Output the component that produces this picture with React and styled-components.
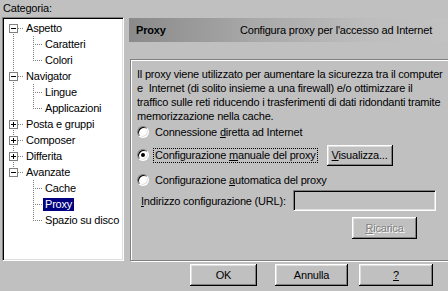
import React from "react";
import styled, { createGlobalStyle, css } from "styled-components";

const Global = createGlobalStyle`
  html, body { margin: 0; padding: 0; background: #c0c0c0; overflow: hidden; }
  body {
    font-family: "Liberation Sans", Arial, sans-serif;
    font-size: 11px;
    letter-spacing: -0.2px;
    color: #000;
  }
  #root { width: 448px; height: 291px; }
`;

const Page = styled.div`
  width: 448px;
  height: 291px;
  display: flex;
  flex-direction: column;
  overflow: hidden;
`;

const Top = styled.div`
  display: flex;
  height: 261px;
`;

const LeftCol = styled.div`
  display: flex;
  flex-direction: column;
  padding-left: 2px;
  width: 122px;
  flex: none;
`;

const CategoryLabel = styled.div`
  height: 17px;
  line-height: 16px;
  padding-left: 1px;
`;

const sunken = css`
  border: 1px solid;
  border-color: #808080 #fff #fff #808080;
  box-shadow: inset 1px 1px 0 #000, inset -1px -1px 0 #dfdfdf;
`;

const Tree = styled.div`
  ${sunken};
  box-sizing: border-box;
  height: 244px;
  width: 122px;
  background: #fff;
  padding: 2px 0 0 1px;
  overflow: hidden;
`;

const TreeRow = styled.div`
  display: flex;
  align-items: center;
  height: 16px;
  white-space: nowrap;
`;

const Glyph = styled.svg`
  display: block;
  flex: none;
`;

const NodeLabel = styled.span`
  padding: 0 2px;
  line-height: 13px;
  height: 13px;
  ${(p) =>
    p.$selected &&
    css`
      background: #000080;
      color: #fff;
    `}
`;

const RightCol = styled.div`
  flex: 1;
  min-width: 0;
  margin-left: 5px;
  padding-top: 18px;
  display: flex;
  flex-direction: column;
`;

const Header = styled.div`
  height: 24px;
  display: flex;
  align-items: center;
  padding-left: 7px;
  background: linear-gradient(90deg, #8a8a8a 0%, #a9a9a9 40%, #bdbdbd 75%, #c2c2c2 100%);
  white-space: nowrap;
`;

const HeaderTitle = styled.span`
  font-weight: bold;
  width: 104px;
  flex: none;
`;

const HeaderDesc = styled.span``;

const GroupBox = styled.div`
  margin-top: 17px;
  margin-left: 1px;
  height: 202px;
  width: 330px;
  box-sizing: border-box;
  border: 1px solid #808080;
  box-shadow: inset 1px 1px 0 #fff, 1px 1px 0 #fff;
  padding: 7px 0 0 6px;
  display: flex;
  flex-direction: column;
`;

const Para = styled.p`
  margin: 0;
  line-height: 14px;
  white-space: nowrap;
`;

const OptionRow = styled.div`
  display: flex;
  align-items: center;
  height: ${(p) => p.$h || 16}px;
  margin-top: ${(p) => p.$mt || 0}px;
  padding-left: ${(p) => p.$pl || 0}px;
  white-space: nowrap;
`;

const Radio = styled.span`
  position: relative;
  box-sizing: border-box;
  width: 12px;
  height: 12px;
  flex: none;
  border-radius: 50%;
  background: #fff;
  border: 1px solid;
  border-color: #808080 #fff #fff #808080;
  box-shadow: inset 1px 1px 0 #000, inset -1px -1px 0 #dfdfdf;
  ${(p) =>
    p.$checked &&
    css`
      &::after {
        content: "";
        position: absolute;
        left: 3px;
        top: 3px;
        width: 4px;
        height: 4px;
        border-radius: 50%;
        background: #000;
      }
    `}
`;

const RadioLabel = styled.span`
  margin-left: 4px;
  padding: 0 1px;
  line-height: 13px;
  border: 1px dotted ${(p) => (p.$focused ? "#000" : "transparent")};
`;

const Button = styled.button`
  font: inherit;
  letter-spacing: inherit;
  color: ${(p) => (p.disabled ? "#808080" : "#000")};
  text-shadow: ${(p) => (p.disabled ? "1px 1px 0 #fff" : "none")};
  background: #c0c0c0;
  border: none;
  padding: 0;
  width: ${(p) => p.$w}px;
  height: ${(p) => p.$h || 22}px;
  margin-left: ${(p) => p.$ml || 0}px;
  flex: none;
  box-shadow: inset -1px -1px 0 #000, inset 1px 1px 0 #fff,
    inset -2px -2px 0 #808080, inset 2px 2px 0 #dfdfdf;
  u { text-decoration: underline; }
`;

const FieldLabel = styled.span`
  margin-left: 4px;
`;

const TextField = styled.div`
  ${sunken};
  box-sizing: border-box;
  background: #c0c0c0;
  width: 143px;
  height: 21px;
  margin-left: 7px;
`;

const Footer = styled.div`
  display: flex;
  padding: 3px 0 0 190px;
`;

const dots = { stroke: "#808080", strokeDasharray: "1 1", shapeRendering: "crispEdges" };

function Expander({ kind }) {
  return (
    <g shapeRendering="crispEdges">
      <rect x="5.5" y="4.5" width="8" height="8" fill="#fff" stroke="#808080" />
      <line x1="7" y1="8.5" x2="12" y2="8.5" stroke="#000" />
      {kind === "plus" && <line x1="9.5" y1="6" x2="9.5" y2="11" stroke="#000" />}
    </g>
  );
}

function RootNode({ label, expander, first, last }) {
  return (
    <TreeRow>
      <Glyph width="20" height="16">
        <g {...dots}>
          {!first && <line x1="9.5" y1="0" x2="9.5" y2="4" />}
          {!last && <line x1="9.5" y1="12" x2="9.5" y2="16" />}
          <line x1="14" y1="8.5" x2="20" y2="8.5" />
        </g>
        <Expander kind={expander} />
      </Glyph>
      <NodeLabel>{label}</NodeLabel>
    </TreeRow>
  );
}

function ChildNode({ label, parentCont, last, selected }) {
  return (
    <TreeRow>
      <Glyph width="20" height="16">
        {parentCont && <line x1="9.5" y1="0" x2="9.5" y2="16" {...dots} />}
      </Glyph>
      <Glyph width="19" height="16">
        <g {...dots}>
          <line x1="9.5" y1="0" x2="9.5" y2={last ? 9 : 16} />
          <line x1="11" y1="8.5" x2="19" y2="8.5" />
        </g>
      </Glyph>
      <NodeLabel $selected={selected}>{label}</NodeLabel>
    </TreeRow>
  );
}

const tree = [
  { label: "Aspetto", expander: "minus", first: true, children: ["Caratteri", "Colori"] },
  { label: "Navigator", expander: "minus", children: ["Lingue", "Applicazioni"] },
  { label: "Posta e gruppi", expander: "plus" },
  { label: "Composer", expander: "plus" },
  { label: "Differita", expander: "plus" },
  { label: "Avanzate", expander: "minus", last: true, children: ["Cache", "Proxy", "Spazio su disco"] },
];

export default function App() {
  return (
    <Page>
      <Global />
      <Top>
        <LeftCol>
          <CategoryLabel>Categoria:</CategoryLabel>
          <Tree>
            {tree.map((n) => (
              <React.Fragment key={n.label}>
                <RootNode label={n.label} expander={n.expander} first={n.first} last={n.last} />
                {(n.children || []).map((c, i, arr) => (
                  <ChildNode
                    key={c}
                    label={c}
                    parentCont={!n.last}
                    last={i === arr.length - 1}
                    selected={c === "Proxy"}
                  />
                ))}
              </React.Fragment>
            ))}
          </Tree>
        </LeftCol>
        <RightCol>
          <Header>
            <HeaderTitle>Proxy</HeaderTitle>
            <HeaderDesc>Configura proxy per l'accesso ad Internet</HeaderDesc>
          </Header>
          <GroupBox>
            <Para>
              Il proxy viene utilizzato per aumentare la sicurezza tra il computer
              <br />
              e&nbsp; Internet (di solito insieme a una firewall) e/o ottimizzare il
              <br />
              traffico sulle reti riducendo i trasferimenti di dati ridondanti tramite
              <br />
              memorizzazione nella cache.
            </Para>
            <OptionRow $mt={1}>
              <Radio />
              <RadioLabel>
                Connessione <u>d</u>iretta ad Internet
              </RadioLabel>
            </OptionRow>
            <OptionRow $mt={4} $h={22}>
              <Radio $checked />
              <RadioLabel $focused>
                Configurazione <u>m</u>anuale del proxy
              </RadioLabel>
              <Button $w={66} $h={21} $ml={9}>
                <u>V</u>isualizza...
              </Button>
            </OptionRow>
            <OptionRow $mt={6}>
              <Radio />
              <RadioLabel>
                Configurazione <u>a</u>utomatica del proxy
              </RadioLabel>
            </OptionRow>
            <OptionRow $mt={2} $h={21}>
              <FieldLabel>
                <u>I</u>ndirizzo configurazione (URL):
              </FieldLabel>
              <TextField />
            </OptionRow>
            <OptionRow $mt={6} $h={22}>
              <Button $w={65} $ml={215} disabled>
                <u>R</u>icarica
              </Button>
            </OptionRow>
          </GroupBox>
        </RightCol>
      </Top>
      <Footer>
        <Button $w={67}>OK</Button>
        <Button $w={73} $ml={18}>Annulla</Button>
        <Button $w={74} $ml={11}>
          <u>?</u>
        </Button>
      </Footer>
    </Page>
  );
}
